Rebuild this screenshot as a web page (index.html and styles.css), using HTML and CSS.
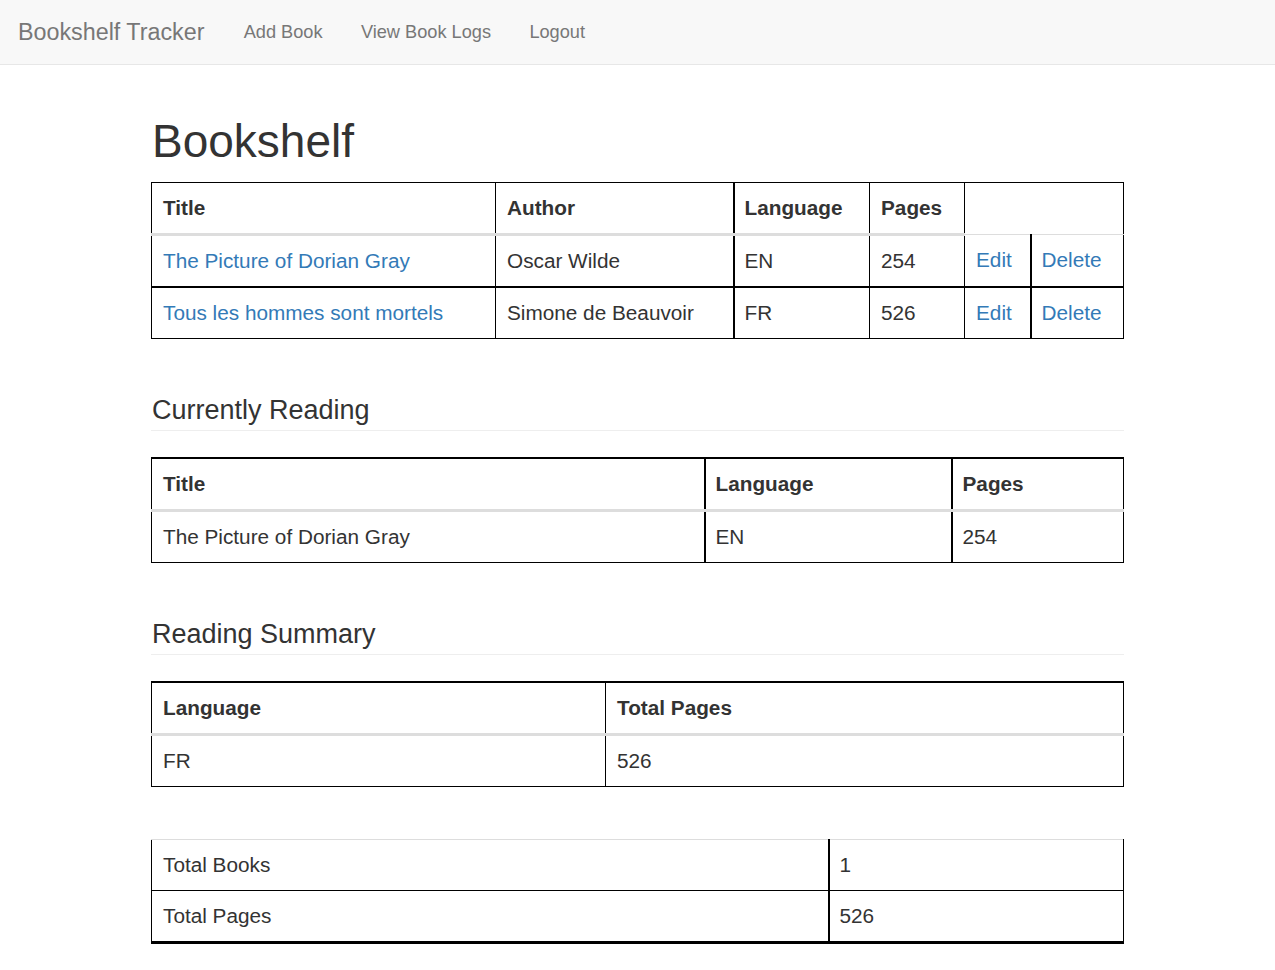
FILE: index.html
```html
<!DOCTYPE html>
<html lang="en">
<head>
<meta charset="utf-8">
<title>Bookshelf Tracker</title>
<link rel="stylesheet" href="styles.css">
</head>
<body>
<nav class="navbar">
  <a class="brand" href="#">Bookshelf Tracker</a>
  <ul class="nav">
    <li><a href="#">Add Book</a></li>
    <li><a href="#">View Book Logs</a></li>
    <li><a href="#">Logout</a></li>
  </ul>
</nav>
<main class="container">
  <h1 class="title">Bookshelf</h1>
  <table class="grid t-books">
    <colgroup>
      <col class="c-title"><col class="c-author"><col class="c-lang"><col class="c-pages"><col class="c-edit"><col class="c-del">
    </colgroup>
    <thead>
      <tr><th>Title</th><th>Author</th><th class="thick-l">Language</th><th>Pages</th><th colspan="2" class="th-empty"></th></tr>
    </thead>
    <tbody>
      <tr class="row-first"><td><a href="#">The Picture of Dorian Gray</a></td><td>Oscar Wilde</td><td class="thick-l">EN</td><td>254</td><td><a href="#">Edit</a></td><td class="thick-l"><a href="#">Delete</a></td></tr>
      <tr class="row-thick-top"><td><a href="#">Tous les hommes sont mortels</a></td><td>Simone de Beauvoir</td><td class="thick-l">FR</td><td>526</td><td><a href="#">Edit</a></td><td class="thick-l"><a href="#">Delete</a></td></tr>
    </tbody>
  </table>

  <h2 class="section">Currently Reading</h2>
  <table class="grid thick-top">
    <colgroup><col class="c-cr-title"><col class="c-cr-lang"><col class="c-cr-pages"></colgroup>
    <thead>
      <tr><th>Title</th><th class="thick-l">Language</th><th class="thick-l">Pages</th></tr>
    </thead>
    <tbody>
      <tr><td>The Picture of Dorian Gray</td><td class="thick-l">EN</td><td class="thick-l">254</td></tr>
    </tbody>
  </table>

  <h2 class="section">Reading Summary</h2>
  <table class="grid thick-top">
    <colgroup><col class="c-rs-lang"><col class="c-rs-pages"></colgroup>
    <thead>
      <tr><th>Language</th><th>Total Pages</th></tr>
    </thead>
    <tbody>
      <tr><td>FR</td><td>526</td></tr>
    </tbody>
  </table>

  <table class="grid totals">
    <colgroup><col class="c-tot-label"><col class="c-tot-val"></colgroup>
    <tbody>
      <tr class="row-first-light"><td>Total Books</td><td class="thick-l">1</td></tr>
      <tr><td>Total Pages</td><td class="thick-l">526</td></tr>
    </tbody>
  </table>
</main>
</body>
</html>
```

FILE: styles.css
```css
html, body {
  margin: 0;
  padding: 0;
}

body {
  font-family: "Liberation Sans", Arial, Helvetica, sans-serif;
  color: #333;
  background: #fff;
  font-size: 20.75px;
}

a {
  color: #337ab7;
  text-decoration: none;
}

/* Navbar */
.navbar {
  display: flex;
  align-items: center;
  height: 64px;
  background: #f8f8f8;
  border-bottom: 1px solid #e7e7e7;
}

.brand {
  color: #777;
  font-size: 23.3px;
  line-height: 64px;
  padding: 0 20px 0 18px;
}

.nav {
  display: flex;
  list-style: none;
  margin: 0;
  padding: 0;
}

.nav a {
  display: block;
  color: #777;
  font-size: 18.2px;
  line-height: 64px;
  padding: 0 19.2px;
}

/* Content */
.container {
  display: flow-root;
  width: 973px;
  margin: 0 auto;
  padding-bottom: 30px;
}

.title {
  font-size: 46px;
  font-weight: 500;
  line-height: 50.6px;
  margin: 51px 0 15px;
  padding-left: 1px;
}

.section {
  font-size: 27px;
  font-weight: 500;
  line-height: 30px;
  margin: 56px 0 26px;
  padding: 0 0 5px 1px;
  border-bottom: 1px solid #eee;
}

/* Tables */
.grid {
  width: 972px;
  border-collapse: collapse;
  table-layout: fixed;
  border: 1px solid #000;
}

.grid th,
.grid td {
  border: 1px solid #000;
  padding: 11px 11px;
  line-height: 28px;
  text-align: left;
  vertical-align: middle;
  white-space: nowrap;
}

.grid th {
  font-weight: bold;
}

.grid thead th {
  border-bottom: 3px solid #ddd;
}

.grid thead th.th-empty {
  border-bottom: 1px solid #ddd;
}

.grid .thick-l {
  border-left: 2px solid #000;
  padding-left: 10px;
}

.grid .row-thick-top td {
  border-top: 2px solid #000;
}

.thick-top {
  border-top: 2px solid #000;
}

.grid.totals {
  margin-top: 52px;
  border-top: 1px solid #ddd;
  border-bottom: 3px solid #000;
}

.grid.totals .row-first-light td {
  border-top: 1px solid #ddd;
}

/* Column widths */
.c-title { width: 344px; }
.c-author { width: 238px; }
.c-lang { width: 136px; }
.c-pages { width: 95px; }
.c-edit { width: 66px; }
.c-del { width: 93px; }

.c-cr-title { width: 553px; }
.c-cr-lang { width: 247px; }
.c-cr-pages { width: 172px; }

.c-rs-lang { width: 454px; }
.c-rs-pages { width: 518px; }

.c-tot-label { width: 677px; }
.c-tot-val { width: 295px; }
```
